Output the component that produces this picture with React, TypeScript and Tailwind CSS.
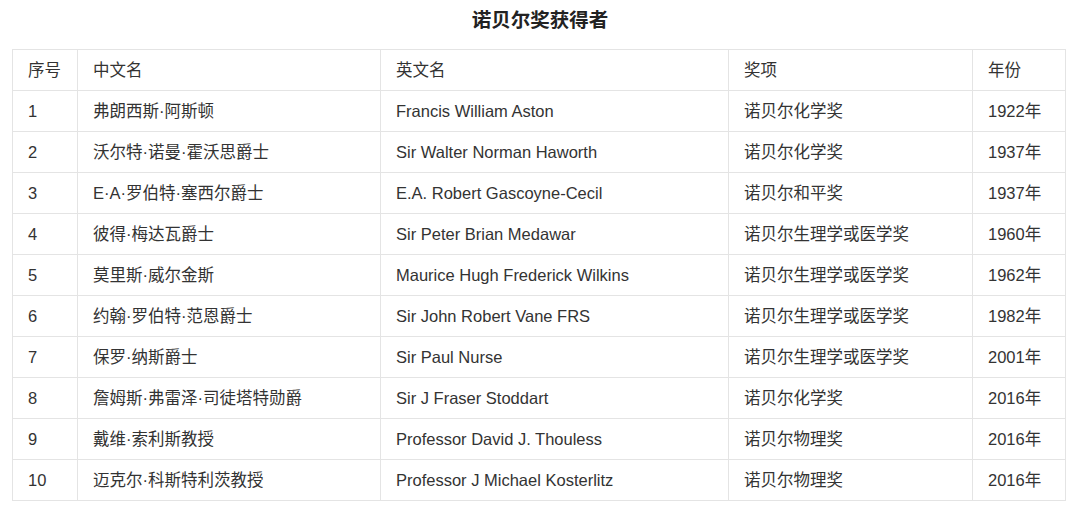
const rows = [
  ['1', '弗朗西斯·阿斯顿', 'Francis William Aston', '诺贝尔化学奖', '1922年'],
  ['2', '沃尔特·诺曼·霍沃思爵士', 'Sir Walter Norman Haworth', '诺贝尔化学奖', '1937年'],
  ['3', 'E·A·罗伯特·塞西尔爵士', 'E.A. Robert Gascoyne-Cecil', '诺贝尔和平奖', '1937年'],
  ['4', '彼得·梅达瓦爵士', 'Sir Peter Brian Medawar', '诺贝尔生理学或医学奖', '1960年'],
  ['5', '莫里斯·威尔金斯', 'Maurice Hugh Frederick Wilkins', '诺贝尔生理学或医学奖', '1962年'],
  ['6', '约翰·罗伯特·范恩爵士', 'Sir John Robert Vane FRS', '诺贝尔生理学或医学奖', '1982年'],
  ['7', '保罗·纳斯爵士', 'Sir Paul Nurse', '诺贝尔生理学或医学奖', '2001年'],
  ['8', '詹姆斯·弗雷泽·司徒塔特勋爵', 'Sir J Fraser Stoddart', '诺贝尔化学奖', '2016年'],
  ['9', '戴维·索利斯教授', 'Professor David J. Thouless', '诺贝尔物理奖', '2016年'],
  ['10', '迈克尔·科斯特利茨教授', 'Professor J Michael Kosterlitz', '诺贝尔物理奖', '2016年'],
];

const headers = ['序号', '中文名', '英文名', '奖项', '年份'];
const widths = ['w-[65px]', 'w-[303px]', 'w-[348px]', 'w-[244px]', 'w-[93px]'];

export default function App() {
  return (
    <div className="min-h-[519px] bg-white text-[#333] font-['Liberation_Sans','Noto_Sans_CJK_SC',sans-serif]">
      <h1 className="pt-[8px] text-center text-[19.5px] font-bold leading-[24px] text-[#222]">
        诺贝尔奖获得者
      </h1>
      <div className="mt-[17px] px-[12px]">
        <table className="w-[1053px] table-fixed border-collapse text-[16.5px]">
          <colgroup>
            {widths.map(w => (
              <col key={w} className={w} />
            ))}
          </colgroup>
          <thead>
            <tr className="h-[41px]">
              {headers.map(h => (
                <th key={h} className="border border-[#e4e4e4] px-[15px] text-left font-normal">
                  {h}
                </th>
              ))}
            </tr>
          </thead>
          <tbody>
            {rows.map(row => (
              <tr key={row[0]} className="h-[41px]">
                {row.map((cell, i) => (
                  <td key={i} className="border border-[#e4e4e4] px-[15px]">
                    {cell}
                  </td>
                ))}
              </tr>
            ))}
          </tbody>
        </table>
      </div>
    </div>
  );
}
